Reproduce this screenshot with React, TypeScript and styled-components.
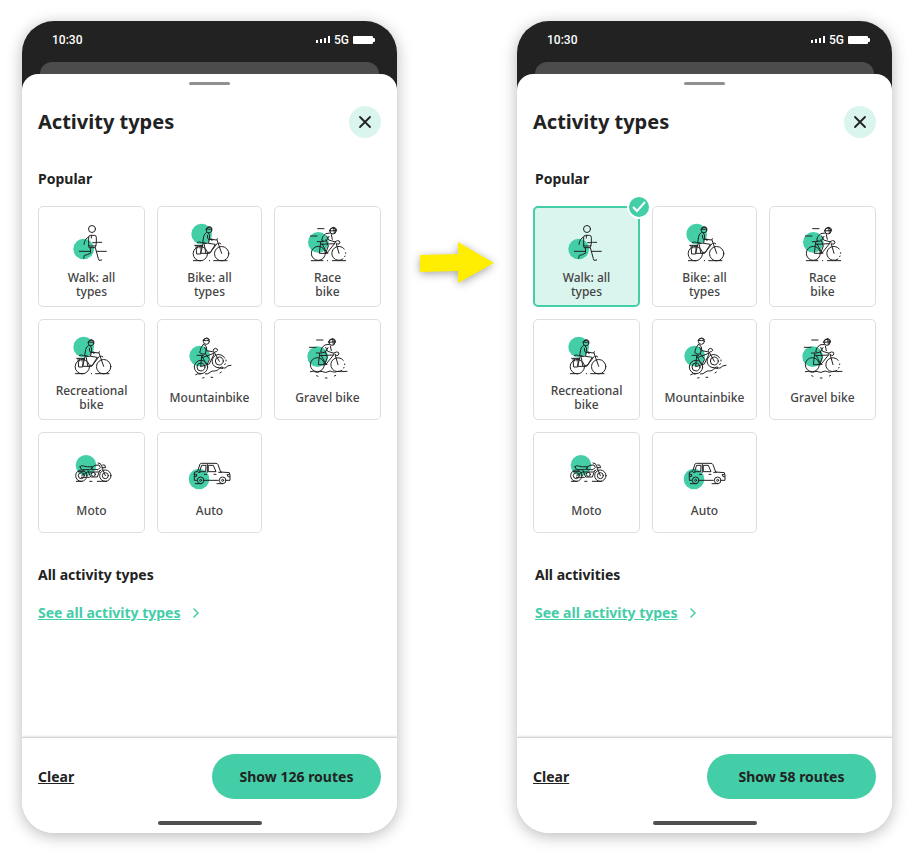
import React, { useState } from "react";
import styled, { createGlobalStyle, css } from "styled-components";

const mint = "#43cea8";
const ink = "#222222";

const GlobalStyle = createGlobalStyle`
  *, *::before, *::after { box-sizing: border-box; }
  body {
    margin: 0;
    background: #ffffff;
    color: ${ink};
    font-family: "Noto Sans", "Open Sans", sans-serif;
  }
  button { font: inherit; color: inherit; cursor: pointer; }
`;

const Page = styled.main`
  display: grid;
  grid-template-columns: minmax(0, 1fr) 120px minmax(0, 1fr);
  min-height: 100vh;
  padding: 21px 22px;
`;

const PhoneFrame = styled.section`
  display: flex;
  flex-direction: column;
  overflow: hidden;
  border-radius: 32px;
  background: linear-gradient(${ink} 100px, #ffffff 100px);
  box-shadow: 0 3px 16px rgba(0, 0, 0, 0.28);
`;

const StatusBar = styled.div`
  display: flex;
  align-items: center;
  justify-content: space-between;
  height: 41px;
  padding: 0 22px 4px 30px;
  color: #ffffff;
  font: 500 12px/16px Roboto, sans-serif;
`;

const StatusIcons = styled.div`
  display: flex;
  align-items: center;
  gap: 4px;
  padding-top: 1px;
`;

const BackCard = styled.div`
  height: 12px;
  margin: 0 18px;
  border-radius: 12px 12px 0 0;
  background: #4c4c4c;
`;

const Sheet = styled.div`
  display: flex;
  flex: 1;
  flex-direction: column;
  border-radius: 16px 16px 0 0;
  background: #ffffff;
`;

const Handle = styled.div`
  width: 41px;
  height: 3px;
  margin: 8px auto 0;
  border-radius: 2px;
  background: #909090;
`;

const Header = styled.header`
  display: flex;
  align-items: center;
  justify-content: space-between;
  padding: 21px 16px 0;
`;

const Title = styled.h1`
  margin: 0;
  font-size: 20px;
  font-weight: 700;
  line-height: 32px;
`;

const CloseButton = styled.button`
  display: grid;
  place-items: center;
  width: 32px;
  height: 32px;
  padding: 0;
  border: 0;
  border-radius: 50%;
  background: #daf5ee;
`;

const Body = styled.div`
  flex: 1;
  padding: 31px 16px 24px;
`;

const SectionTitle = styled.h2<{ $inset: number }>`
  margin: 0;
  padding-left: ${(p) => p.$inset}px;
  font-size: 14px;
  font-weight: 700;
  line-height: 20px;
`;

const TileGrid = styled.div`
  display: grid;
  grid-template-columns: 107fr 105fr 107fr;
  grid-auto-rows: 101px;
  gap: 12px;
  margin: 17px 0 32px;
`;

const Tile = styled.button<{ $selected: boolean }>`
  position: relative;
  display: flex;
  flex-direction: column;
  align-items: center;
  padding: 11px 0 0;
  border: 1px solid #dedede;
  border-radius: 5px;
  background: #ffffff;
  ${(p) =>
    p.$selected &&
    css`
      padding-top: 10px;
      border: 2px solid ${mint};
      background: #daf5ee;
    `}
`;

const TileLabel = styled.span`
  display: grid;
  place-items: center;
  height: 28px;
  margin-top: 5px;
  color: #444444;
  font-size: 12px;
  font-weight: 500;
  line-height: 14px;
  text-align: center;
  white-space: pre-line;
`;

const Badge = styled.span`
  position: absolute;
  top: -13px;
  right: -13px;
  display: grid;
  place-items: center;
  width: 24px;
  height: 24px;
  border: 2px solid #ffffff;
  border-radius: 50%;
  background: ${mint};
`;

const MoreLink = styled.a<{ $inset: number }>`
  display: inline-flex;
  align-items: center;
  gap: 12px;
  margin-top: 18px;
  padding-left: ${(p) => p.$inset}px;
  color: ${mint};
  font-size: 14px;
  font-weight: 700;
  line-height: 20px;
`;

const Footer = styled.footer`
  padding: 16px 16px 8px;
  border-top: 1px solid #d4d4d4;
  box-shadow: 0 0 3px rgba(0, 0, 0, 0.2);
`;

const Actions = styled.div`
  display: flex;
  align-items: center;
  justify-content: space-between;
`;

const ClearButton = styled.button`
  padding: 0;
  border: 0;
  background: none;
  font-size: 14px;
  font-weight: 700;
  line-height: 20px;
  text-decoration: underline;
`;

const ShowButton = styled.button`
  width: 169px;
  height: 45px;
  border: 0;
  border-radius: 23px;
  background: ${mint};
  font-size: 14px;
  font-weight: 700;
`;

const HomeBar = styled.div`
  width: 104px;
  height: 4px;
  margin: 22px auto 0;
  border-radius: 2px;
  background: #505050;
`;

const Between = styled.div`
  display: flex;
  align-items: flex-start;
  justify-content: center;
  padding-top: 221px;
`;

const ArrowSvg = styled.svg`
  overflow: visible;
  filter: drop-shadow(0 2px 4px rgba(0, 0, 0, 0.35));
`;

const LineSvg = styled.svg`
  fill: none;
  stroke: #222222;
  stroke-width: 3;
  stroke-linecap: round;
  stroke-linejoin: round;
`;

function Art({ origin, children }: { origin: string; children: React.ReactNode }) {
  return (
    <LineSvg width="61" height="48" viewBox={`${origin} 183 144`} aria-hidden="true">
      {children}
    </LineSvg>
  );
}

function Spot({ cx, cy }: { cx: number; cy: number }) {
  return <circle cx={cx} cy={cy} r="31" fill={mint} stroke="none" />;
}

function WalkIcon() {
  return (
    <Art origin="93 54">
      <Spot cx={161} cy={147} />
      <circle cx="186" cy="87" r="10.5" />
      <path d="M176 137V112q0-6 6-6h11q6 0 6 6v18q0 8-6 8h-11q-6 0-6-1" />
      <path d="M184 106v8M176 111q-12 4-14 22M199 128l3-1h13M188 128h11" />
      <path d="M176 137l1 6h18l3-6M181 144l1 15q-9 6-19 7l-2 9M196 143l9 33 2 5 8-1" />
      <path d="M148 154h33M200 154h29" />
    </Art>
  );
}

function CityBikeIcon() {
  return (
    <Art origin="87 54">
      <Spot cx={155} cy={102} />
      <circle cx="177" cy="90" r="8.5" />
      <path d="M169 87q3-7 10-7 6 1 7 7-8 2-17 0z" />
      <path d="M169 98q-7 3-8 12l-3 18q10 4 18 1l3-21q-1-8-6-10M172 106q0 10 4 13l10-1" />
      <path d="M142 127q7-3 13 1l12 2M184 118l16 2 2-4M183 116l3 6" />
      <path d="M176 130l20 3-15 24h-7M159 132l-7 28h27l22-29M163 134l4 24M201 120l14 40M204 130q7-3 9 2" />
      <circle cx="151" cy="161" r="21.5" />
      <circle cx="215" cy="161" r="21.5" />
      <path d="M134 136h24M138 137l2 25h12l2-25M143 137v7M150 137v7" />
      <path d="M130 182h23M178 182h1M191 182h40" />
    </Art>
  );
}

function Racer() {
  return (
    <>
      <circle cx="189" cy="93" r="9" />
      <path d="M178 92q3-9 12-10 9 0 10 8zM191 82l2 18" />
      <path d="M181 99l-14 2q-11 8-12 20 12 6 16-2l6-10M170 108l6 12 17 5M184 104l3 14" />
      <path d="M142 125h18M193 126q12-7 15-3 4 5-1 9-5 3-8-3" />
      <path d="M152 126l-4 34h22l26-32M153 133l40-2M156 131l15 29M168 119l7 19-8 21h7M199 132l8 28" />
      <circle cx="145" cy="160" r="21" />
      <path d="M219 177a21 21 0 1 1 4-30M227 158v2M225 168l-1 2" />
      <path d="M143 86h19M121 108h20" />
    </>
  );
}

function RaceBikeIcon() {
  return (
    <Art origin="81 54">
      <Spot cx={145} cy={127} />
      <Racer />
      <path d="M124 182h35M172 182h1M187 182h40" />
    </Art>
  );
}

function GravelBikeIcon() {
  return (
    <Art origin="81 48">
      <Spot cx={143} cy={125} />
      <g transform="translate(-3 -11)">
        <Racer />
      </g>
      <path d="M121 170q10-3 16 1 7 2 12-1 8-2 12 1 7 3 13-1 7-4 13 0 7 3 13 0 8-3 14 0l17-1" />
      <path d="M140 182l4 2M166 189h5M193 183l4-2" />
    </Art>
  );
}

function MountainBikeIcon() {
  return (
    <Art origin="87 48">
      <Spot cx={149} cy={123} />
      <circle cx="169" cy="79" r="9" />
      <path d="M160 76q3-7 10-7 7 1 8 6-9 4-18 1z" />
      <path d="M160 88q-9 9-11 25 7 6 17 4l4-18q-2-10-10-11M164 97l5 10 18 3" />
      <path d="M141 121h20M190 112v-6q0-5 6-6 7 1 7 6-2 5-8 5" />
      <path d="M155 122l-3 33 26-8 14-30M157 128l34-13M156 124l13 24M166 116l13 17-8 16M193 112l15 27" />
      <circle cx="153" cy="156" r="20" />
      <circle cx="153" cy="156" r="12" />
      <path d="M216 156a20 20 0 1 1 8-27M228 135v3M226 146l-2 3" />
      <circle cx="208" cy="138" r="12" />
      <path d="M137 179q7-5 14-2M166 177q9 1 14-5 7-6 14-4 8 0 12-6 6-4 12-2M217 158q6 3 11 0l4-5 11-2" />
      <path d="M158 189l4-1M183 187h5M210 174l4-3" />
    </Art>
  );
}

function MotoIcon() {
  return (
    <Art origin="93 42">
      <Spot cx={168} cy={106} />
      <circle cx="154" cy="137" r="17" />
      <circle cx="154" cy="137" r="9" />
      <circle cx="226" cy="137" r="17" />
      <circle cx="226" cy="137" r="9" />
      <path d="M150 110q3-5 10-2 12 4 28 2-3 9-10 9h-20q-8-2-8-9zM188 110q4-6 19-5l4 7-7 7h-18zM204 99l7 2 7 13M218 105h6l3 8h-8" />
      <path d="M216 113l10 24M155 137l17-11h33l8-6M174 122l8 19h20l7-19" />
      <circle cx="190" cy="133" r="6" />
      <path d="M145 125h18M154 142h24M139 154h17M179 154h7M202 154h28" />
    </Art>
  );
}

function AutoIcon() {
  return (
    <Art origin="447 42">
      <Spot cx={507} cy={147} />
      <path d="M500 151h-7v-24l10-3 7-22q1-2 4-2h44q4 0 6 4l8 22 26 2 2 8v15h-10M524 151h41" />
      <path d="M516 106h12l-1 19h-17zM536 106h14l8 19h-22zM532 103v24M505 127h5M523 133h7M552 133h6M566 127h9" />
      <circle cx="512" cy="151" r="10" />
      <circle cx="512" cy="151" r="3" />
      <circle cx="578" cy="151" r="10" />
      <circle cx="578" cy="151" r="3" />
      <path d="M493 133h7v6h-7M599 134h-8l3 6h5M496 161h18M561 161h17" />
    </Art>
  );
}

const activities = [
  { label: "Walk: all\ntypes", Icon: WalkIcon },
  { label: "Bike: all\ntypes", Icon: CityBikeIcon },
  { label: "Race\nbike", Icon: RaceBikeIcon },
  { label: "Recreational\nbike", Icon: CityBikeIcon },
  { label: "Mountainbike", Icon: MountainBikeIcon },
  { label: "Gravel bike", Icon: GravelBikeIcon },
  { label: "Moto", Icon: MotoIcon },
  { label: "Auto", Icon: AutoIcon },
];

interface PhoneProps {
  initial: string[];
  allHeading: string;
  routes: number;
  inset?: number;
}

function Phone({ initial, allHeading, routes, inset = 0 }: PhoneProps) {
  const [selected, setSelected] = useState(initial);
  const toggle = (label: string) =>
    setSelected((now) => (now.includes(label) ? now.filter((l) => l !== label) : [...now, label]));

  return (
    <PhoneFrame>
      <StatusBar>
        <span>10:30</span>
        <StatusIcons>
          <svg width="14" height="8" viewBox="0 0 14 8" fill="#fff" aria-hidden="true">
            <path d="M0 4h2v3H0zM4 3h2v4H4zM8 2h2v5H8zM12 0h2v7h-2z" />
          </svg>
          <span>5G</span>
          <svg width="22" height="8" viewBox="0 0 22 8" fill="#fff" aria-hidden="true">
            <rect width="20" height="8" rx="1" />
            <rect x="19" y="2" width="3" height="4" rx="1" />
          </svg>
        </StatusIcons>
      </StatusBar>
      <BackCard />
      <Sheet>
        <Handle />
        <Header>
          <Title>Activity types</Title>
          <CloseButton type="button" aria-label="Close">
            <svg width="14" height="14" viewBox="0 0 14 14" stroke={ink} strokeWidth="1.8" strokeLinecap="round" aria-hidden="true">
              <path d="M2 2l10 10M12 2L2 12" />
            </svg>
          </CloseButton>
        </Header>
        <Body>
          <SectionTitle $inset={inset}>Popular</SectionTitle>
          <TileGrid>
            {activities.map(({ label, Icon }) => {
              const on = selected.includes(label);
              return (
                <Tile key={label} type="button" $selected={on} aria-pressed={on} onClick={() => toggle(label)}>
                  <Icon />
                  <TileLabel>{label}</TileLabel>
                  {on && (
                    <Badge>
                      <svg width="16" height="12" viewBox="0 0 16 12" fill="none" stroke="#fff" strokeWidth="2" aria-hidden="true">
                        <path d="M2 6l4 4 8-9" />
                      </svg>
                    </Badge>
                  )}
                </Tile>
              );
            })}
          </TileGrid>
          <SectionTitle $inset={inset}>{allHeading}</SectionTitle>
          <MoreLink href="#all" $inset={inset}>
            See all activity types
            <svg width="6" height="10" viewBox="0 0 6 10" fill="none" stroke={mint} strokeWidth="1.5" strokeLinecap="round" strokeLinejoin="round" aria-hidden="true">
              <path d="M1 1l4 4-4 4" />
            </svg>
          </MoreLink>
        </Body>
        <Footer>
          <Actions>
            <ClearButton type="button" onClick={() => setSelected([])}>Clear</ClearButton>
            <ShowButton type="button">Show {routes} routes</ShowButton>
          </Actions>
          <HomeBar />
        </Footer>
      </Sheet>
    </PhoneFrame>
  );
}

export default function App() {
  return (
    <>
      <GlobalStyle />
      <Page>
        <Phone initial={[]} allHeading="All activity types" routes={126} />
        <Between>
          <ArrowSvg width="74" height="42" viewBox="0 0 74 42" fill="#ffee00" aria-hidden="true">
            <path d="M0 13l38-1V0l36 21-36 20V29L0 30z" />
          </ArrowSvg>
        </Between>
        <Phone initial={["Walk: all\ntypes"]} allHeading="All activities" routes={58} inset={2} />
      </Page>
    </>
  );
}
